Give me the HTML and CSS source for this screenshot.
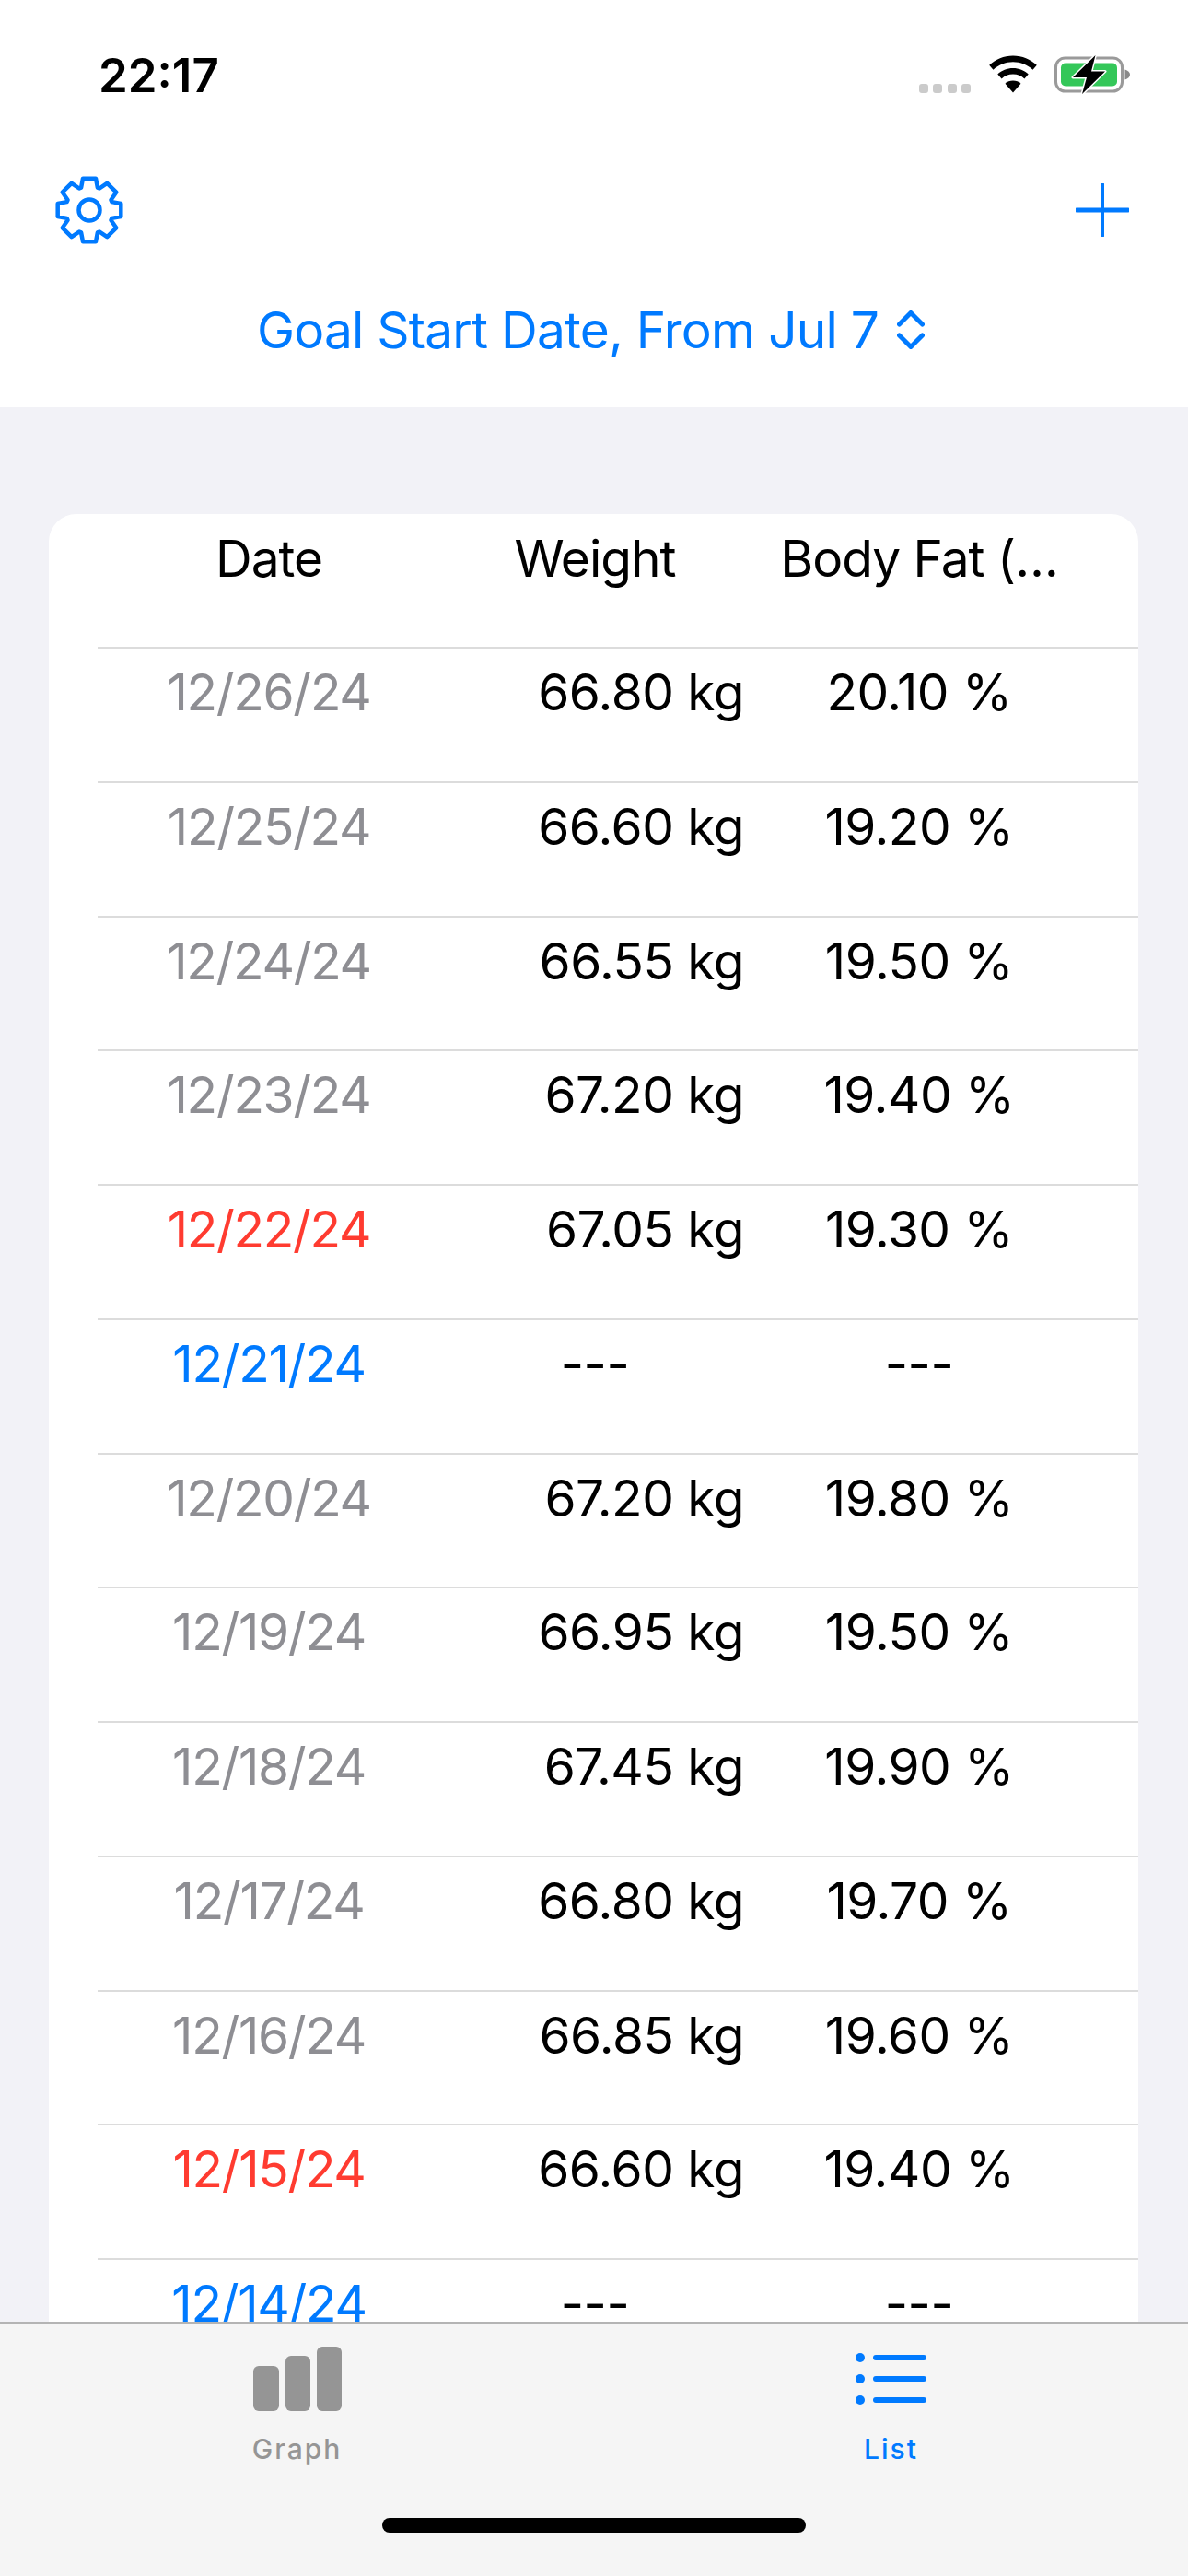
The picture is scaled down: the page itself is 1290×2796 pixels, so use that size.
FILE: index.html
```html
<!DOCTYPE html>
<html lang="en">
<head>
    <meta charset="UTF-8">
    <meta name="viewport" content="width=device-width, initial-scale=1.0">
    <title>Weight List</title>
    <link rel="stylesheet" href="styles.css">
</head>
<body>
    <div class="app">
        <div class="top">
            <div class="status-bar">
                <span class="time">22:17</span>
                <div class="status-icons">
                    <div class="signal"><i></i><i></i><i></i><i></i></div>
                    <svg class="wifi" width="54" height="41" viewBox="0 0 54 41">
                        <path d="M27 .5C17 .5 8 4.400 1.200 10.800L5.500 15.700C11.200 10.400 18.800 7.200 27 7.200S42.800 10.400 48.500 15.700L52.800 10.800C46 4.400 37 .5 27 .5Z"/>
                        <path d="M27 14C20.600 14 14.700 16.500 10.300 20.500L14.600 25.400C17.900 22.400 22.200 20.600 27 20.600S36.100 22.400 39.400 25.400L43.700 20.500C39.300 16.500 33.400 14 27 14Z"/>
                        <path d="M27 27.500C23.700 27.500 20.700 28.700 18.500 30.700L27 40.500L35.500 30.700C33.300 28.700 30.300 27.500 27 27.500Z"/>
                    </svg>
                    <svg class="battery" width="84" height="44" viewBox="0 0 84 44">
                        <rect x="1.500" y="4" width="72" height="36" rx="10" fill="none" stroke="#9a9a9a" stroke-width="3"/>
                        <rect x="7" y="9.500" width="61" height="25" rx="5" fill="#34c759"/>
                        <path d="M76.500 16.500C80 17.500 82 19.500 82 22S80 26.500 76.500 27.500Z" fill="#8a8a8a"/>
                        <path d="M44.500 1L20 25H35L30 43L55 18.500H40Z" fill="#000" stroke="#fff" stroke-width="3" stroke-linejoin="round" paint-order="stroke"/>
                    </svg>
                </div>
            </div>
            <div class="toolbar">
                <svg class="gear" width="80" height="80" viewBox="0 0 80 80">
                    <path d="M31.100 15.600L33 5.700H47L48.900 15.600L51 16.500L59.300 10.800L69.200 20.700L63.500 29L64.400 31.100L74.300 33V47L64.400 48.900L63.500 51L69.200 59.300L59.300 69.200L51 63.500L48.900 64.400L47 74.300H33L31.100 64.400L29 63.500L20.700 69.200L10.800 59.300L16.500 51L15.600 48.900L5.700 47V33L15.600 31.100L16.500 29L10.800 20.700L20.700 10.800L29 16.500Z"/>
                    <circle cx="40" cy="40" r="11.500"/>
                </svg>
                <svg class="plus" width="58" height="58" viewBox="0 0 58 58">
                    <path d="M29 1V57" stroke-width="4"/>
                    <path d="M1 29H57" stroke-width="5"/>
                </svg>
            </div>
            <div class="picker">
                <span>Goal Start Date, From Jul 7</span>
                <svg class="updown" width="30" height="42" viewBox="0 0 30 42">
                    <path d="M2.500 15L15 2.500L27.500 15"/>
                    <path d="M2.500 27L15 39.500L27.500 27"/>
                </svg>
            </div>
        </div>

        <div class="content">
            <div class="card">
                <div class="row head">
                    <div class="col-date">Date</div>
                    <div class="col-weight center">Weight</div>
                    <div class="col-fat">Body Fat (…</div>
                </div>
                <div class="row"><div class="col-date past">12/26/24</div><div class="col-weight">66.80 kg</div><div class="col-fat">20.10 %</div></div>
                <div class="row"><div class="col-date past">12/25/24</div><div class="col-weight">66.60 kg</div><div class="col-fat">19.20 %</div></div>
                <div class="row"><div class="col-date past">12/24/24</div><div class="col-weight">66.55 kg</div><div class="col-fat">19.50 %</div></div>
                <div class="row"><div class="col-date past">12/23/24</div><div class="col-weight">67.20 kg</div><div class="col-fat">19.40 %</div></div>
                <div class="row"><div class="col-date sunday">12/22/24</div><div class="col-weight">67.05 kg</div><div class="col-fat">19.30 %</div></div>
                <div class="row"><div class="col-date saturday">12/21/24</div><div class="col-weight center">---</div><div class="col-fat">---</div></div>
                <div class="row"><div class="col-date past">12/20/24</div><div class="col-weight">67.20 kg</div><div class="col-fat">19.80 %</div></div>
                <div class="row"><div class="col-date past">12/19/24</div><div class="col-weight">66.95 kg</div><div class="col-fat">19.50 %</div></div>
                <div class="row"><div class="col-date past">12/18/24</div><div class="col-weight">67.45 kg</div><div class="col-fat">19.90 %</div></div>
                <div class="row"><div class="col-date past">12/17/24</div><div class="col-weight">66.80 kg</div><div class="col-fat">19.70 %</div></div>
                <div class="row"><div class="col-date past">12/16/24</div><div class="col-weight">66.85 kg</div><div class="col-fat">19.60 %</div></div>
                <div class="row"><div class="col-date sunday">12/15/24</div><div class="col-weight">66.60 kg</div><div class="col-fat">19.40 %</div></div>
                <div class="row"><div class="col-date saturday">12/14/24</div><div class="col-weight center">---</div><div class="col-fat">---</div></div>
            </div>
        </div>

        <div class="tabbar">
            <div class="tabs">
                <div class="tab">
                    <svg class="tab-icon" width="96" height="70" viewBox="0 0 96 70" fill="#959595">
                        <rect x="0" y="21" width="28" height="49" rx="6"/>
                        <rect x="35" y="10" width="27" height="60" rx="6"/>
                        <rect x="69" y="0" width="27" height="70" rx="6"/>
                    </svg>
                    <span class="tab-label">Graph</span>
                </div>
                <div class="tab active">
                    <svg class="tab-icon" width="78" height="70" viewBox="0 0 78 70" fill="#007aff">
                        <circle cx="5" cy="12" r="5"/>
                        <circle cx="5" cy="35" r="5"/>
                        <circle cx="5" cy="58" r="5"/>
                        <rect x="19" y="9" width="58" height="6" rx="3"/>
                        <rect x="19" y="32" width="58" height="6" rx="3"/>
                        <rect x="19" y="55" width="58" height="6" rx="3"/>
                    </svg>
                    <span class="tab-label">List</span>
                </div>
            </div>
            <div class="home-bar"></div>
        </div>
    </div>
</body>
</html>
```

FILE: styles.css
```css
* {
    box-sizing: border-box;
}
body {
    margin: 0;
    font-family: Inter, "Liberation Sans", sans-serif;
    background-color: #f2f2f7;
    color: #000;
}
.app {
    display: flex;
    flex-direction: column;
    height: 2796px;
    overflow: hidden;
}

/* top area */
.top {
    height: 442px;
    flex: none;
    background-color: #fff;
}
.status-bar {
    height: 170px;
    padding: 60px 61px 0 107px;
    display: flex;
    justify-content: space-between;
    align-items: flex-start;
}
.time {
    font-size: 51px;
    line-height: 44px;
    font-weight: 600;
    letter-spacing: 0;
}
.status-icons {
    display: flex;
    align-items: flex-start;
}
.signal {
    display: flex;
    gap: 5.500px;
    margin: 31px 19px 0 0;
}
.signal i {
    width: 10px;
    height: 9.500px;
    border-radius: 3px;
    background-color: #cbcbcb;
}
.wifi {
    display: block;
    margin-right: 18px;
}
.battery {
    display: block;
    margin-top: -1px;
}
.toolbar {
    height: 116px;
    padding: 0 64px 0 57px;
    display: flex;
    justify-content: space-between;
    align-items: center;
}
.gear path,
.gear circle {
    fill: none;
    stroke: #007aff;
    stroke-width: 4.500;
    stroke-linejoin: round;
}
.plus path {
    fill: none;
    stroke: #007aff;
    stroke-linecap: round;
}
.picker {
    height: 144px;
    padding-right: 7px;
    display: flex;
    justify-content: center;
    align-items: center;
    gap: 20px;
    font-size: 55px;
    letter-spacing: -.78px;
    color: #007aff;
}
.updown path {
    fill: none;
    stroke: #007aff;
    stroke-width: 5px;
    stroke-linecap: round;
    stroke-linejoin: round;
}

/* list */
.content {
    flex: 1;
    min-height: 0;
    overflow: hidden;
    padding: 116px 54px 0 53px;
}
.card {
    background-color: #fff;
    border-radius: 30px 30px 0 0;
    padding-left: 53px;
}
.row {
    display: grid;
    grid-template-columns: 372px 336px 368px;
    height: 145.750px;
    border-bottom: 2px solid #dcdcdc;
    font-size: 55px;
    line-height: 95px;
    letter-spacing: -.5px;
}
.col-date,
.col-fat {
    text-align: center;
    white-space: nowrap;
}
.col-date {
    letter-spacing: -1.300px;
}
.col-weight {
    text-align: right;
    padding-right: 6px;
    white-space: nowrap;
}
.col-weight.center {
    text-align: center;
    padding-right: 0;
}
.row.head {
    height: 146px;
    line-height: 96px;
}
.head div {
    letter-spacing: -1px;
}
.past {
    color: #8e8e93;
}
.sunday {
    color: #ff3b30;
}
.saturday {
    color: #007aff;
}

/* bottom tabs */
.tabbar {
    height: 276px;
    flex: none;
    background-color: #f5f5f5;
    border-top: 2px solid #b4b4b4;
}
.tabs {
    display: grid;
    grid-template-columns: 645px 645px;
    padding-top: 25px;
}
.tab {
    display: flex;
    flex-direction: column;
    align-items: center;
    color: #959595;
}
.tab.active {
    color: #007aff;
}
.tab-icon {
    display: block;
}
.tab-label {
    font-size: 30px;
    line-height: 36px;
    font-weight: 500;
    letter-spacing: 2px;
    margin-top: 23px;
}
.home-bar {
    width: 460px;
    height: 16px;
    margin: 57px auto 0;
    border-radius: 8px;
    background-color: #000;
}
```
